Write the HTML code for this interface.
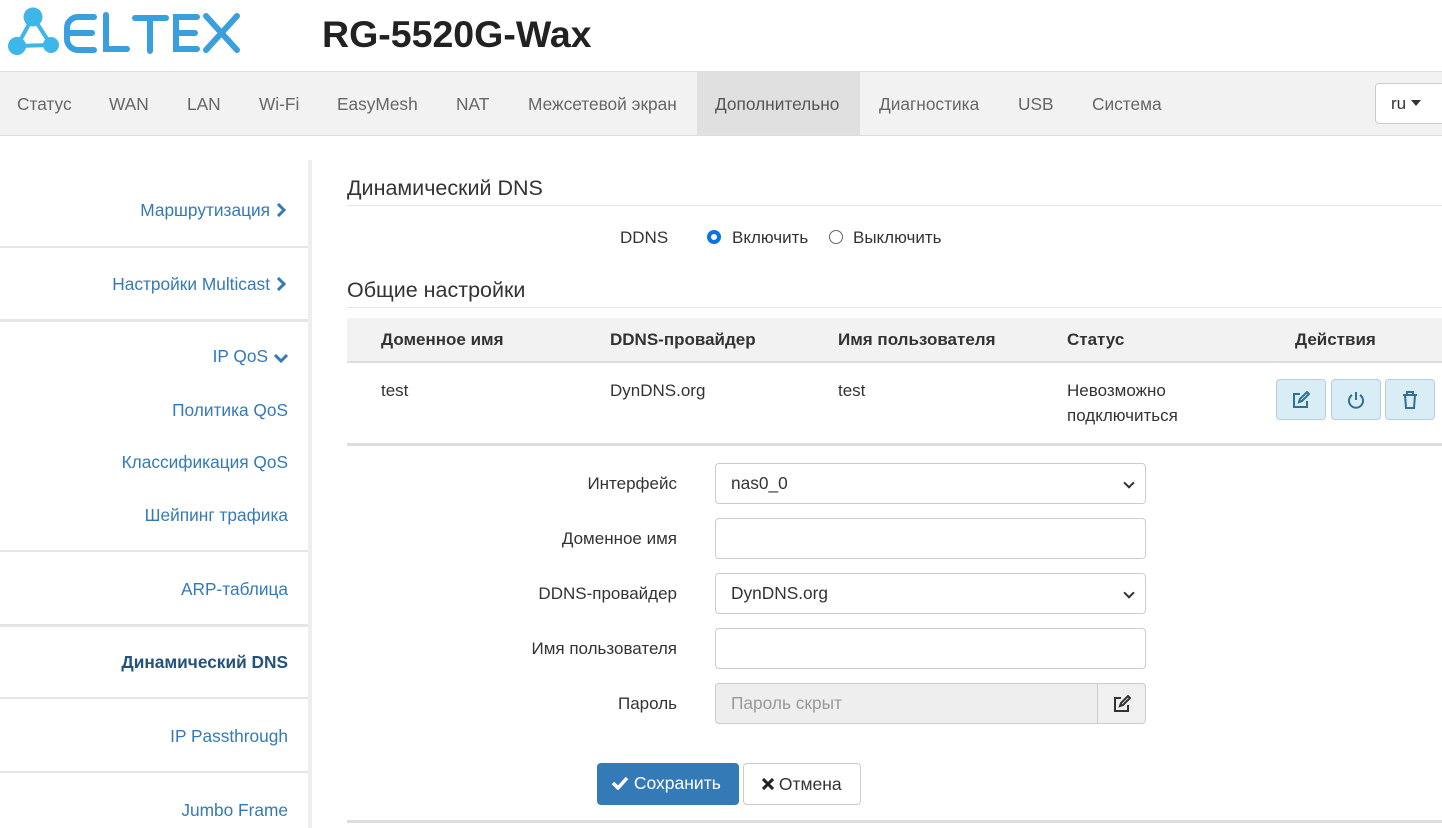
<!DOCTYPE html><html><head><meta charset="utf-8"><style>
*{box-sizing:border-box}body{margin:0;width:1442px;height:828px;overflow:hidden;font-family:"Liberation Sans",Arial,sans-serif;font-size:16px;color:#333;background:#fff;position:relative}
.a{position:absolute}
.nav{top:71px;left:0;width:1442px;height:65px;background:#f2f2f2;border-top:1px solid #ddd;border-bottom:1px solid #ddd}
.nav span{position:absolute;top:22px;color:#666;font-size:17.3px}
.side{left:0;top:160px;width:312px;height:668px;border-right:4px solid #eee}
.sl{position:absolute;right:22px;color:#337ab7;font-size:17.3px;text-align:right}
.sl svg{margin-left:6px;vertical-align:-1px}
.hr{position:absolute;left:0;width:308px;height:2px;background:#e5e5e5}
.lab{position:absolute;right:765px;font-size:17px;color:#333}
.inp{position:absolute;left:715px;width:431px;height:41px;border:1px solid #ccc;border-radius:4px;background:#fff;font-size:17.3px;padding:9px 15px}
.sel:after{content:"";position:absolute;right:12px;top:15px;width:6px;height:6px;border-right:2px solid #333;border-bottom:2px solid #333;transform:rotate(45deg)}
.th{position:absolute;top:330px;font-weight:bold;font-size:17px}
.ab{position:absolute;top:379px;width:50px;height:41px;background:#d9edf7;border:1px solid #bcd;border-radius:4px}
.ab svg{position:absolute;left:15px;top:11px}
.t{font-size:17px}
</style></head><body>
<svg class="a" style="left:0;top:0" width="250" height="70" viewBox="0 0 250 70">
<g fill="#3fb6e8"><circle cx="33" cy="17" r="9.5"/><circle cx="17" cy="46" r="9"/><circle cx="51" cy="45" r="8"/></g>
<path d="M33 17 L17 46 L51 45 Z" fill="none" stroke="#3fb6e8" stroke-width="4"/>
<g fill="none" stroke="#3a9fdc" stroke-width="6" stroke-linecap="round"><path d="M94 17 H78 A11 11 0 0 0 67 28 V39 A11 11 0 0 0 78 50 H94 M70 33 H92"/><path d="M106 15 V49 H127"/><path d="M135 18 H166 M150 18 V51"/><path d="M197 17 H176 V49 H197 M176 33 H195"/><path d="M206 16 L237 50 M237 16 L206 50"/></g></svg>
<div class="a" style="left:322px;top:13px;font-size:37.5px;font-weight:bold;color:#222">RG-5520G-Wax</div>
<div class="a nav"><div class="a" style="left:697px;top:0;width:163px;height:63px;background:#e0e0e0"></div>
<span style="left:17px">Статус</span><span style="left:109px">WAN</span><span style="left:187px">LAN</span><span style="left:259px">Wi-Fi</span><span style="left:337px">EasyMesh</span><span style="left:456px">NAT</span><span style="left:528px">Межсетевой экран</span><span style="left:715px;color:#555">Дополнительно</span><span style="left:879px">Диагностика</span><span style="left:1018px">USB</span><span style="left:1092px">Система</span>
<div class="a" style="left:1375px;top:11px;width:70px;height:41px;background:#fff;border:1px solid #ccc;border-radius:4px;padding:10px 15px;font-size:17px;color:#333">ru <svg width="10" height="6" viewBox="0 0 10 6" style="vertical-align:3px"><path d="M0 0H10L5 6Z" fill="#333"/></svg></div></div>
<div class="a side">
<div class="hr" style="top:86px"></div><div class="hr" style="top:159px;height:3px"></div><div class="hr" style="top:390px"></div><div class="hr" style="top:464px;height:3px"></div><div class="hr" style="top:537px"></div><div class="hr" style="top:611px"></div>
<div class="sl" style="top:40px">Маршрутизация<svg width="10" height="14" viewBox="0 0 10 14"><path d="M2 1L8 7L2 13" fill="none" stroke="#337ab7" stroke-width="3"/></svg></div>
<div class="sl" style="top:114px">Настройки Multicast<svg width="10" height="14" viewBox="0 0 10 14"><path d="M2 1L8 7L2 13" fill="none" stroke="#337ab7" stroke-width="3"/></svg></div>
<div class="sl" style="top:186px;right:20px">IP QoS<svg width="14" height="10" viewBox="0 0 14 10"><path d="M1 2L7 8L13 2" fill="none" stroke="#337ab7" stroke-width="3"/></svg></div>
<div class="sl" style="top:240px;right:20px">Политика QoS</div>
<div class="sl" style="top:292px;right:20px">Классификация QoS</div>
<div class="sl" style="top:345px;right:20px">Шейпинг трафика</div>
<div class="sl" style="top:419px;right:20px">ARP-таблица</div>
<div class="sl" style="top:492px;right:20px;font-weight:bold;color:#23527c">Динамический DNS</div>
<div class="sl" style="top:566px;right:20px">IP Passthrough</div>
<div class="sl" style="top:640px;right:20px">Jumbo Frame</div>
</div>
<div class="a" style="left:347px;top:176px;font-size:21.5px">Динамический DNS</div>
<div class="a" style="left:347px;top:205px;width:1095px;height:1px;background:#e5e5e5"></div>
<div class="a t" style="left:620px;top:228px">DDNS</div>
<div class="a" style="left:707px;top:230px;width:14px;height:14px;border-radius:50%;border:4px solid #0b74e5;background:#fff"></div>
<div class="a t" style="left:732px;top:228px">Включить</div>
<div class="a" style="left:829px;top:230px;width:14px;height:14px;border-radius:50%;border:1px solid #666"></div>
<div class="a t" style="left:853px;top:228px">Выключить</div>
<div class="a" style="left:347px;top:278px;font-size:21.5px">Общие настройки</div>
<div class="a" style="left:347px;top:307px;width:1095px;height:1px;background:#e5e5e5"></div>
<div class="a" style="left:347px;top:318px;width:1095px;height:45px;background:#f2f2f2;border-bottom:2px solid #ddd"></div>
<div class="th" style="left:381px">Доменное имя</div><div class="th" style="left:610px">DDNS-провайдер</div><div class="th" style="left:838px">Имя пользователя</div><div class="th" style="left:1067px">Статус</div><div class="th" style="left:1295px">Действия</div>
<div class="a t" style="left:381px;top:381px">test</div><div class="a t" style="left:610px;top:381px">DynDNS.org</div><div class="a t" style="left:838px;top:381px">test</div><div class="a t" style="left:1067px;top:378px;line-height:25px">Невозможно<br>подключиться</div>
<div class="ab" style="left:1276px"><svg width="18" height="18" viewBox="0 0 18 18" fill="none" stroke="#31708f" stroke-width="2"><path d="M8 3H2V16H15V10"/><path d="M7 11L8 8L15 1L17 3L10 10Z"/></svg></div>
<div class="ab" style="left:1331px"><svg width="18" height="18" viewBox="0 0 18 18" fill="none" stroke="#31708f" stroke-width="2"><path d="M5 4A7 7 0 1 0 13 4"/><path d="M9 1V9"/></svg></div>
<div class="ab" style="left:1385px"><svg width="18" height="18" viewBox="0 0 18 18" fill="none" stroke="#31708f" stroke-width="2"><path d="M2 4H16M6 4V1H12V4M4 4L5 17H13L14 4"/></svg></div>
<div class="a" style="left:347px;top:443px;width:1095px;height:3px;background:#ddd"></div>
<div class="lab" style="top:474px">Интерфейс</div><div class="inp sel" style="top:463px">nas0_0</div>
<div class="lab" style="top:529px">Доменное имя</div><div class="inp" style="top:518px"></div>
<div class="lab" style="top:584px">DDNS-провайдер</div><div class="inp sel" style="top:573px">DynDNS.org</div>
<div class="lab" style="top:639px">Имя пользователя</div><div class="inp" style="top:628px"></div>
<div class="lab" style="top:694px">Пароль</div><div class="inp" style="top:683px;background:#eee;color:#999;width:384px;border-radius:4px 0 0 4px">Пароль скрыт</div>
<div class="a" style="left:1097px;top:683px;width:49px;height:41px;border:1px solid #ccc;border-radius:0 4px 4px 0;background:#f0f0f0"><svg style="position:absolute;left:15px;top:11px" width="18" height="18" viewBox="0 0 18 18" fill="none" stroke="#333" stroke-width="2"><path d="M8 3H2V16H15V10"/><path d="M7 11L8 8L15 1L17 3L10 10Z"/></svg></div>
<div class="a" style="left:597px;top:763px;width:142px;height:42px;background:#337ab7;border-radius:4px;color:#fff;font-size:17.5px;padding:10px 0 0 14px"><svg width="18" height="14" viewBox="0 0 18 14" style="vertical-align:-1px"><path d="M2 7L7 12L16 2" fill="none" stroke="#fff" stroke-width="3.5"/></svg> Сохранить</div>
<div class="a" style="left:743px;top:763px;width:118px;height:42px;border:1px solid #ccc;border-radius:4px;font-size:17.5px;padding:10px 0 0 18px"><svg width="12" height="12" viewBox="0 0 12 12"><path d="M1 1L11 11M11 1L1 11" stroke="#222" stroke-width="3"/></svg> Отмена</div>
<div class="a" style="left:347px;top:820px;width:1095px;height:3px;background:#ddd"></div>
</body></html>
